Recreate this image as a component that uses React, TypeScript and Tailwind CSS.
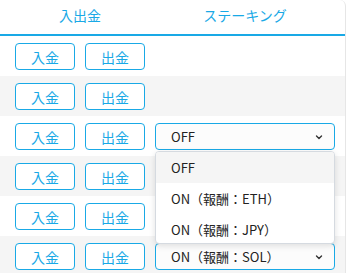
import React from "react";

const font = { fontFamily: '"Noto Sans CJK JP", "Noto Sans", sans-serif' };

function Chevron() {
  return (
    <svg width="10" height="10" viewBox="0 0 10 10" className="shrink-0">
      <path d="M2.5 4 L5 6.5 L7.5 4" fill="none" stroke="#333" strokeWidth="1.4" strokeLinecap="round" strokeLinejoin="round" />
    </svg>
  );
}

function Btn({ label }: { label: string }) {
  return (
    <button className="w-[60px] h-[27px] border border-[#19a9e6] rounded-[4px] text-[#19a9e6] text-[14px] leading-none flex items-center justify-center bg-white">
      {label}
    </button>
  );
}

function Select({ value }: { value: string }) {
  return (
    <div className="w-[180px] h-[27px] border border-[#19a9e6] rounded-[4px] bg-[#fcfcfc] flex items-center justify-between pl-[15px] pr-[10px] text-[13px] text-[#222]">
      <span>{value}</span>
      <Chevron />
    </div>
  );
}

export default function App() {
  const rows = [null, null, "OFF", null, null, "ON（報酬：SOL）"];
  return (
    <div className="w-[352px] h-[273px] bg-white overflow-hidden" style={font}>
      <div className="w-[346px] h-[273px] border-r border-[#e6e6e6] rounded-tr-[6px] relative">
        <div className="flex h-[36px] border-b-2 border-[#19a9e6] text-[#19a9e6] text-[14px]">
          <div className="w-[160px] flex items-center justify-center pb-[4px]">入出金</div>
          <div className="w-[170px] flex items-center justify-center pb-[4px]">ステーキング</div>
        </div>
        {rows.map((sel, i) => (
          <div key={i} className={`h-[40px] flex items-start pt-[7px] pl-[15px] gap-[10px] ${i % 2 === 1 ? "bg-[#f5f5f5]" : "bg-white"}`}>
            <Btn label="入金" />
            <Btn label="出金" />
            {sel && <Select value={sel} />}
          </div>
        ))}
        <div className="absolute left-[155px] top-[151px] w-[180px] h-[93px] bg-white border border-[#d5dae0] rounded-[4px] shadow-[0_2px_6px_rgba(0,0,0,0.12)] text-[13px] text-[#222] overflow-hidden">
          <div className="h-[31px] flex items-center pl-[15px] bg-[#f5f5f5]">OFF</div>
          <div className="h-[31px] flex items-center pl-[15px]">ON（報酬：ETH）</div>
          <div className="h-[31px] flex items-center pl-[15px]">ON（報酬：JPY）</div>
        </div>
      </div>
    </div>
  );
}
